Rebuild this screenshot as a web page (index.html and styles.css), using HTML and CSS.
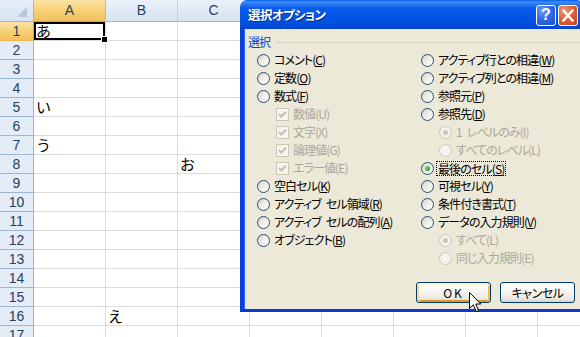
FILE: index.html
```html
<!DOCTYPE html>
<html lang="ja">
<head>
<meta charset="utf-8">
<title>選択オプション</title>
<link rel="stylesheet" href="styles.css">
</head>
<body>
<div class="sheet">
  <div class="corner"><span class="tri"></span></div><div class="ch sel">A</div><div class="ch">B</div><div class="ch">C</div><div class="ch"></div><div class="ch"></div><div class="ch"></div><div class="ch"></div><div class="ch"></div>
  <div class="rh sel">1</div><div class="c active">あ</div><div class="c"></div><div class="c"></div><div class="c"></div><div class="c"></div><div class="c"></div><div class="c"></div><div class="c"></div>
  <div class="rh">2</div><div class="c"></div><div class="c"></div><div class="c"></div><div class="c"></div><div class="c"></div><div class="c"></div><div class="c"></div><div class="c"></div>
  <div class="rh">3</div><div class="c"></div><div class="c"></div><div class="c"></div><div class="c"></div><div class="c"></div><div class="c"></div><div class="c"></div><div class="c"></div>
  <div class="rh">4</div><div class="c"></div><div class="c"></div><div class="c"></div><div class="c"></div><div class="c"></div><div class="c"></div><div class="c"></div><div class="c"></div>
  <div class="rh">5</div><div class="c">い</div><div class="c"></div><div class="c"></div><div class="c"></div><div class="c"></div><div class="c"></div><div class="c"></div><div class="c"></div>
  <div class="rh">6</div><div class="c"></div><div class="c"></div><div class="c"></div><div class="c"></div><div class="c"></div><div class="c"></div><div class="c"></div><div class="c"></div>
  <div class="rh">7</div><div class="c">う</div><div class="c"></div><div class="c"></div><div class="c"></div><div class="c"></div><div class="c"></div><div class="c"></div><div class="c"></div>
  <div class="rh">8</div><div class="c"></div><div class="c"></div><div class="c">お</div><div class="c"></div><div class="c"></div><div class="c"></div><div class="c"></div><div class="c"></div>
  <div class="rh">9</div><div class="c"></div><div class="c"></div><div class="c"></div><div class="c"></div><div class="c"></div><div class="c"></div><div class="c"></div><div class="c"></div>
  <div class="rh">10</div><div class="c"></div><div class="c"></div><div class="c"></div><div class="c"></div><div class="c"></div><div class="c"></div><div class="c"></div><div class="c"></div>
  <div class="rh">11</div><div class="c"></div><div class="c"></div><div class="c"></div><div class="c"></div><div class="c"></div><div class="c"></div><div class="c"></div><div class="c"></div>
  <div class="rh">12</div><div class="c"></div><div class="c"></div><div class="c"></div><div class="c"></div><div class="c"></div><div class="c"></div><div class="c"></div><div class="c"></div>
  <div class="rh">13</div><div class="c"></div><div class="c"></div><div class="c"></div><div class="c"></div><div class="c"></div><div class="c"></div><div class="c"></div><div class="c"></div>
  <div class="rh">14</div><div class="c"></div><div class="c"></div><div class="c"></div><div class="c"></div><div class="c"></div><div class="c"></div><div class="c"></div><div class="c"></div>
  <div class="rh">15</div><div class="c"></div><div class="c"></div><div class="c"></div><div class="c"></div><div class="c"></div><div class="c"></div><div class="c"></div><div class="c"></div>
  <div class="rh">16</div><div class="c"></div><div class="c">え</div><div class="c"></div><div class="c"></div><div class="c"></div><div class="c"></div><div class="c"></div><div class="c"></div>
  <div class="rh">17</div><div class="c"></div><div class="c"></div><div class="c"></div><div class="c"></div><div class="c"></div><div class="c"></div><div class="c"></div><div class="c"></div>
</div>

<div class="dialog">
  <div class="titlebar">
    <span class="title">選択オプション</span>
    <span class="tbtn help">?</span>
    <span class="tbtn close"><svg width="20" height="21" viewBox="0 0 20 21"><path d="M5.5 5.5 L14.5 15.5 M14.5 5.5 L5.5 15.5" stroke="#fff" stroke-width="2.4" stroke-linecap="square"/></svg></span>
  </div>
  <div class="dbody">
    <div class="group"><span class="glabel">選択</span><span class="rule"></span></div>
    <div class="cols">
      <div class="col left">
        <div class="opt"><span class="radio"></span>コメント(<u>C</u>)</div>
        <div class="opt"><span class="radio"></span>定数(<u>O</u>)</div>
        <div class="opt"><span class="radio"></span>数式(<u>F</u>)</div>
        <div class="opt sub dis"><span class="check"><svg width="11" height="11" viewBox="0 0 11 11"><path d="M2 5 L4.3 7.5 L9 2.8" fill="none" stroke="#C2C0B2" stroke-width="2"/></svg></span>数値(U)</div>
        <div class="opt sub dis"><span class="check"><svg width="11" height="11" viewBox="0 0 11 11"><path d="M2 5 L4.3 7.5 L9 2.8" fill="none" stroke="#C2C0B2" stroke-width="2"/></svg></span>文字(X)</div>
        <div class="opt sub dis"><span class="check"><svg width="11" height="11" viewBox="0 0 11 11"><path d="M2 5 L4.3 7.5 L9 2.8" fill="none" stroke="#C2C0B2" stroke-width="2"/></svg></span>論理値(G)</div>
        <div class="opt sub dis"><span class="check"><svg width="11" height="11" viewBox="0 0 11 11"><path d="M2 5 L4.3 7.5 L9 2.8" fill="none" stroke="#C2C0B2" stroke-width="2"/></svg></span>エラー値(E)</div>
        <div class="opt"><span class="radio"></span>空白セル(<u>K</u>)</div>
        <div class="opt"><span class="radio"></span>アクティブ&ensp;セル領域(<u>R</u>)</div>
        <div class="opt"><span class="radio"></span>アクティブ&ensp;セルの配列(<u>A</u>)</div>
        <div class="opt"><span class="radio"></span>オブジェクト(<u>B</u>)</div>
      </div>
      <div class="col right">
        <div class="opt"><span class="radio"></span>アクティブ行との相違(<u>W</u>)</div>
        <div class="opt"><span class="radio"></span>アクティブ列との相違(<u>M</u>)</div>
        <div class="opt"><span class="radio"></span>参照元(<u>P</u>)</div>
        <div class="opt"><span class="radio"></span>参照先(<u>D</u>)</div>
        <div class="opt sub dis"><span class="radio on"></span>1&ensp;レベルのみ(I)</div>
        <div class="opt sub dis"><span class="radio"></span>すべてのレベル(L)</div>
        <div class="opt"><span class="radio on"></span><span class="focus">最後のセル(<u>S</u>)</span></div>
        <div class="opt"><span class="radio"></span>可視セル(<u>Y</u>)</div>
        <div class="opt"><span class="radio"></span>条件付き書式(<u>T</u>)</div>
        <div class="opt"><span class="radio"></span>データの入力規則(<u>V</u>)</div>
        <div class="opt sub dis"><span class="radio on"></span>すべて(L)</div>
        <div class="opt sub dis"><span class="radio"></span>同じ入力規則(E)</div>
      </div>
    </div>
    <div class="buttons">
      <button class="btn ok">OK</button>
      <button class="btn">キャンセル</button>
    </div>
  </div>
</div>

<svg class="cursor" width="14" height="22" viewBox="0 0 14 22"><path d="M0.5 0.5 L0.5 16.5 L4.3 12.8 L7.2 19.6 L9.6 18.6 L6.8 12 L11.8 12 Z" fill="#fff" stroke="#000" stroke-width="1" stroke-linejoin="miter"/></svg>
</body>
</html>
```
FILE: styles.css
```css
html, body {
  margin: 0;
  padding: 0;
  width: 580px;
  height: 337px;
  overflow: hidden;
  background: #fff;
}
body {
  position: relative;
  font-family: "Noto Sans CJK JP", "Liberation Sans", sans-serif;
}

/* ---------- spreadsheet ---------- */
.sheet {
  display: grid;
  grid-template-columns: 34px repeat(8, 72px);
  grid-template-rows: 22px repeat(17, 19px);
  width: 610px;
}
.sheet > div {
  box-sizing: border-box;
  border-right: 1px solid #DADCDD;
  border-bottom: 1px solid #DADCDD;
  white-space: nowrap;
}
.sheet > .corner {
  background: linear-gradient(#E6EEF8, #D8E4F3);
  border-right-color: #9EB6CE;
  border-bottom-color: #9EB6CE;
  position: relative;
}
.tri {
  position: absolute;
  right: 6px;
  bottom: 4px;
  width: 0;
  height: 0;
  border-left: 10px solid transparent;
  border-bottom: 10px solid #B8C8DC;
}
.sheet > .ch {
  background: linear-gradient(#EAF1FA, #D7E3F2);
  border-right-color: #C2D3E7;
  border-bottom-color: #9EB6CE;
  text-align: center;
  font: 14px/21px "Liberation Sans", sans-serif;
  color: #27415F;
}
.sheet > .ch.sel {
  background: linear-gradient(#FBE3A8, #F8D37B 45%, #F1C05C);
  border-right-color: #F2B44A;
  border-bottom-color: #F29536;
}
.sheet > .rh {
  background: #E4ECF7;
  border-right-color: #9EB6CE;
  border-bottom-color: #9EB6CE;
  text-align: center;
  font: 14px/18px "Liberation Sans", sans-serif;
  color: #27415F;
}
.sheet > .rh.sel {
  background: linear-gradient(#FBE3A8, #F8D37B 45%, #F1C05C);
  border-right-color: #F29536;
  border-bottom-color: #F2B44A;
}
.c {
  font-size: 15px;
  line-height: 18px;
  padding-left: 2px;
  color: #000;
}
.sheet > .c.active {
  position: relative;
  box-shadow: inset 0 0 0 2px #000;
  z-index: 1;
}
.c.active::after {
  content: "";
  position: absolute;
  right: -3px;
  bottom: -3px;
  width: 5px;
  height: 5px;
  background: #000;
  border: 1px solid #fff;
}

/* ---------- dialog ---------- */
.dialog {
  position: absolute;
  left: 240px;
  top: 0;
  width: 344px;
  font-family: "Noto Sans CJK JP", sans-serif;
  font-feature-settings: "palt";
  font-size: 12px;
  letter-spacing: -0.9px;
  color: #000;
}
.titlebar {
  height: 29px;
  box-sizing: border-box;
  display: flex;
  align-items: center;
  padding: 0 6px 0 8px;
  border-radius: 7px 7px 0 0;
  background: linear-gradient(#0A5BE8 0, #3D8FF8 2px, #2C78F2 4px, #0A5CEC 8px, #0055E5 18px, #004CDA 26px, #0044C8 29px);
}
.title {
  color: #fff;
  font-weight: bold;
  font-size: 12.5px;
  letter-spacing: -0.6px;
  text-shadow: 1px 1px 0 #0A2A8A;
  flex: 1;
}
.tbtn {
  width: 20px;
  height: 21px;
  box-sizing: border-box;
  border: 1px solid #fff;
  border-radius: 3px;
  display: flex;
  align-items: center;
  justify-content: center;
  margin-top: 1px;
  letter-spacing: 0;
}
.help {
  background: radial-gradient(circle at 30% 25%, #6E9CF5 0%, #3569E6 45%, #1E4FD0 100%);
  color: #fff;
  font: bold 16px/1 "Liberation Sans", sans-serif;
  margin-right: 2px;
}
.close {
  background: radial-gradient(circle at 30% 25%, #F39A7C 0%, #E2603B 45%, #C8401C 100%);
}
.close svg {
  display: block;
  margin: -1px;
}
.dbody {
  background: #ECE9D8;
  border-left: 4px solid #0A40DA;
  border-bottom: 3px solid #0A3ACB;
  box-shadow: inset 1px 0 0 #2A66F0;
  padding: 0 0 6px 0;
}
.group {
  display: flex;
  align-items: center;
  height: 14px;
  padding: 6px 0 0 4px;
}
.glabel {
  color: #0046D5;
  font-size: 12px;
  line-height: 14px;
}
.rule {
  flex: 1;
  height: 1px;
  background: #D0D0BF;
  margin-left: 6px;
}
.cols {
  display: flex;
  padding: 2px 0 0 13px;
}
.col.left {
  width: 164px;
}
.opt {
  display: flex;
  align-items: center;
  height: 18px;
  white-space: nowrap;
  line-height: 14px;
}
.opt u {
  text-decoration: underline;
  text-underline-offset: 1px;
}
.opt.sub {
  margin-left: 19px;
}
.col.right .opt.sub {
  margin-left: 18px;
}
.opt.dis {
  color: #ACA899;
}
.radio {
  flex: none;
  width: 13px;
  height: 13px;
  box-sizing: border-box;
  border-radius: 50%;
  border: 1px solid #1C5180;
  background: linear-gradient(135deg, #D5D2C6 0%, #EDECE6 45%, #FFFFFF 100%);
  margin-right: 4px;
  position: relative;
}
.radio.on::after {
  content: "";
  position: absolute;
  left: 3px;
  top: 3px;
  width: 5px;
  height: 5px;
  border-radius: 50%;
  background: radial-gradient(circle at 35% 35%, #7BE07B 0%, #2DB12D 55%, #1C8E1C 100%);
}
.opt.dis .radio {
  border-color: #CAC8BB;
  background: #F4F3EE;
}
.opt.dis .radio.on::after {
  background: #CAC8BB;
}
.check {
  flex: none;
  width: 13px;
  height: 13px;
  box-sizing: border-box;
  border: 1px solid #CAC8BB;
  background: #F6F5F0;
  margin-right: 4px;
}
.check svg {
  display: block;
}
.focus {
  outline: 1px dotted #000;
  outline-offset: 0;
  padding: 0 1px;
  margin-left: -1px;
  line-height: 13px;
}
.buttons {
  display: flex;
  justify-content: flex-end;
  gap: 9px;
  margin-top: 15px;
  padding-right: 9px;
}
.btn {
  width: 75px;
  height: 21px;
  box-sizing: border-box;
  border: 1px solid #003C74;
  border-radius: 3px;
  background: linear-gradient(#FFFFFF 0%, #F7F6F2 40%, #ECEAE3 80%, #D8D3C8 100%);
  font-family: "Noto Sans CJK JP", sans-serif;
  font-feature-settings: "palt";
  font-size: 12px;
  letter-spacing: -0.5px;
  line-height: 17px;
  padding: 0;
  color: #000;
}
.btn.ok {
  box-shadow: inset 0 2px 0 #FFF0CF, inset 2px 0 0 #FCD58F, inset -2px 0 0 #F6B84B, inset 0 -2px 0 #E5971F;
  letter-spacing: 2px;
}
.cursor {
  position: absolute;
  left: 469px;
  top: 292px;
}
```
